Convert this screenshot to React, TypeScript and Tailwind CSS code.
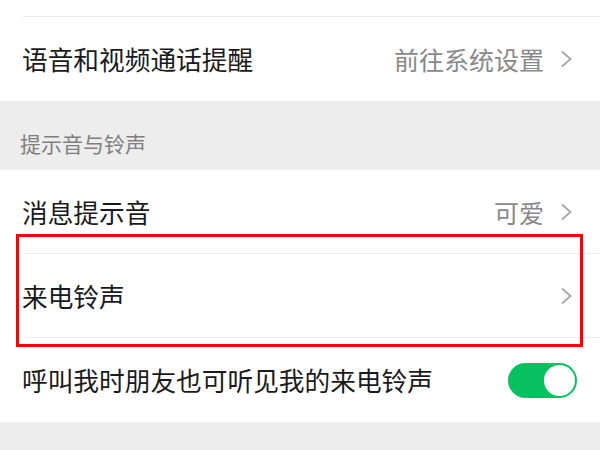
import React from "react";

const font = { fontFamily: '"Noto Sans CJK SC", "Noto Sans", sans-serif' };

const Chevron = () => (
    <svg width="13" height="18" viewBox="0 0 13 18" className="shrink-0">
        <polyline points="2,1.5 10.5,9 2,16.5" fill="none" stroke="#a6a6a6" strokeWidth="1.8" />
    </svg>
);

interface RowProps {
    label: string;
    value?: string;
    divider?: boolean;
    children?: React.ReactNode;
}

const Row = ({ label, value, divider, children }: RowProps) => (
    <div className="relative h-[84px] flex items-center pl-[22px]">
        <div className="flex-1 text-[25.7px] text-[#1a1a1a] leading-none">{label}</div>
        {children ?? (
            <div className="flex items-center gap-[16px] pr-[27px]">
                {value && <span className="text-[25px] text-[#888888] leading-none">{value}</span>}
                <Chevron />
            </div>
        )}
        {divider && <div className="absolute bottom-0 left-[23px] right-0 h-px bg-[#ececec]" />}
    </div>
);

const Toggle = () => (
    <div className="mr-[23px] w-[69px] h-[35px] rounded-full bg-[#07c160] flex items-center justify-end p-[2px]">
        <div className="w-[31px] h-[31px] rounded-full bg-white" />
    </div>
);

export default function App() {
    return (
        <div className="relative w-[600px] h-[450px] overflow-hidden bg-[#ededed]" style={font}>
            <div className="bg-white">
                <div className="h-[17px] relative">
                    <div className="absolute bottom-0 left-[23px] right-0 h-px bg-[#ececec]" />
                </div>
                <Row label="语音和视频通话提醒" value="前往系统设置" />
            </div>
            <div className="h-[69px] pl-[20px] pt-[32px] text-[21px] text-[#7f7f7f] leading-none">
                提示音与铃声
            </div>
            <div className="bg-white">
                <Row label="消息提示音" value="可爱" divider />
                <Row label="来电铃声" divider />
                <Row label="呼叫我时朋友也可听见我的来电铃声">
                    <Toggle />
                </Row>
            </div>
            <div className="absolute left-[16px] top-[234px] w-[567px] h-[113px] border-[3px] border-[#ff0000]" />
        </div>
    );
}
